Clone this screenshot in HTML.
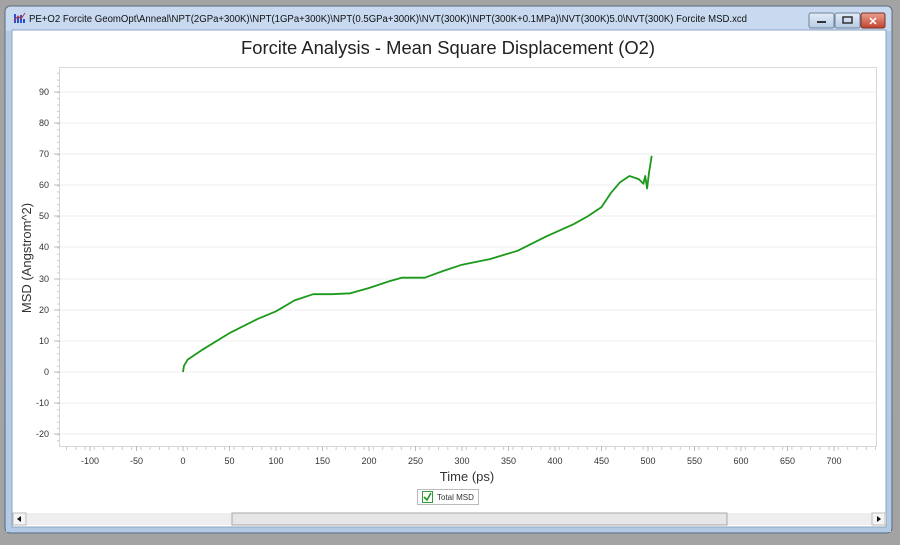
<!DOCTYPE html>
<html><head><meta charset="utf-8"><style>
body{margin:0;width:900px;height:540px;background:#a3a3a3;overflow:hidden;font-family:"Liberation Sans",sans-serif}
</style></head><body>
<svg width="900" height="540" xmlns="http://www.w3.org/2000/svg" font-family="Liberation Sans, sans-serif">
<defs><linearGradient id="tb" x1="0" y1="0" x2="0" y2="1"><stop offset="0" stop-color="#c9daf0"/><stop offset="1" stop-color="#a9c3e3"/></linearGradient>
<linearGradient id="cl" x1="0" y1="0" x2="0" y2="1"><stop offset="0" stop-color="#e8a091"/><stop offset="1" stop-color="#c2432e"/></linearGradient>
<linearGradient id="bt" x1="0" y1="0" x2="0" y2="1"><stop offset="0" stop-color="#e3ecf7"/><stop offset="1" stop-color="#b7cbe4"/></linearGradient></defs>
<rect x="5" y="6" width="887" height="527" rx="5" fill="url(#tb)" stroke="#5b6b7c"/>
<rect x="6" y="31" width="885" height="501" fill="#b4cbe6"/>
<rect x="12" y="30" width="874" height="497" fill="#fff" stroke="#8ea4bf"/>
<g><rect x="14" y="14" width="2" height="9" fill="#2a4fd0"/><rect x="17" y="17" width="2" height="6" fill="#2a4fd0"/><rect x="20" y="15" width="2" height="8" fill="#2a4fd0"/><rect x="23" y="19" width="2" height="4" fill="#2a4fd0"/><path d="M14 21 L18 16 L21 19 L25 13" stroke="#d03030" fill="none"/></g>
<text x="29" y="22" font-size="10" textLength="718" lengthAdjust="spacingAndGlyphs" fill="#111">PE+O2 Forcite GeomOpt\Anneal\NPT(2GPa+300K)\NPT(1GPa+300K)\NPT(0.5GPa+300K)\NVT(300K)\NPT(300K+0.1MPa)\NVT(300K)5.0\NVT(300K) Forcite MSD.xcd</text>
<rect x="809" y="13" width="25" height="15" rx="2" fill="url(#bt)" stroke="#6f839c"/>
<rect x="817" y="21" width="9" height="2" fill="#333"/>
<rect x="835" y="13" width="25" height="15" rx="2" fill="url(#bt)" stroke="#6f839c"/>
<rect x="843" y="17" width="9" height="6" fill="none" stroke="#333" stroke-width="1.5"/>
<rect x="861" y="13" width="24" height="15" rx="2" fill="url(#cl)" stroke="#7a3020"/>
<text x="873" y="25" font-size="11" font-weight="bold" fill="#fff" text-anchor="middle">✕</text>
<text x="448" y="54" font-size="18.5" textLength="414" lengthAdjust="spacingAndGlyphs" fill="#222" text-anchor="middle">Forcite Analysis - Mean Square Displacement (O2)</text>
<rect x="59.5" y="67.5" width="817" height="379" fill="#fff" stroke="#d8d8d8"/>
<g stroke="#ececec" stroke-width="1">
<line x1="60" x2="876" y1="92" y2="92"/><line x1="60" x2="876" y1="123" y2="123"/><line x1="60" x2="876" y1="154" y2="154"/><line x1="60" x2="876" y1="185" y2="185"/><line x1="60" x2="876" y1="216" y2="216"/><line x1="60" x2="876" y1="247" y2="247"/><line x1="60" x2="876" y1="279" y2="279"/><line x1="60" x2="876" y1="310" y2="310"/><line x1="60" x2="876" y1="341" y2="341"/><line x1="60" x2="876" y1="372" y2="372"/><line x1="60" x2="876" y1="403" y2="403"/><line x1="60" x2="876" y1="434" y2="434"/>
</g>
<g stroke="#ccc" stroke-dasharray="1 5.22">
<line x1="57" x2="60" y1="73.3" y2="73.3" stroke-dasharray="none"/>
<line x1="58.5" x2="58.5" y1="79.6" y2="446" stroke-width="3"/>
<line x1="66" x2="876" y1="448.5" y2="448.5" stroke-width="3" stroke-dasharray="1 8.3"/>
</g>
<g stroke="#bbb">
<line x1="54" x2="60" y1="92" y2="92"/><line x1="54" x2="60" y1="123" y2="123"/><line x1="54" x2="60" y1="154" y2="154"/><line x1="54" x2="60" y1="185" y2="185"/><line x1="54" x2="60" y1="216" y2="216"/><line x1="54" x2="60" y1="247" y2="247"/><line x1="54" x2="60" y1="279" y2="279"/><line x1="54" x2="60" y1="310" y2="310"/><line x1="54" x2="60" y1="341" y2="341"/><line x1="54" x2="60" y1="372" y2="372"/><line x1="54" x2="60" y1="403" y2="403"/><line x1="54" x2="60" y1="434" y2="434"/>
<line x1="90" x2="90" y1="446" y2="451"/><line x1="136.5" x2="136.5" y1="446" y2="451"/><line x1="183" x2="183" y1="446" y2="451"/><line x1="229.5" x2="229.5" y1="446" y2="451"/><line x1="276" x2="276" y1="446" y2="451"/><line x1="322.5" x2="322.5" y1="446" y2="451"/><line x1="369" x2="369" y1="446" y2="451"/><line x1="415.5" x2="415.5" y1="446" y2="451"/><line x1="462" x2="462" y1="446" y2="451"/><line x1="508.5" x2="508.5" y1="446" y2="451"/><line x1="555" x2="555" y1="446" y2="451"/><line x1="601.5" x2="601.5" y1="446" y2="451"/><line x1="648" x2="648" y1="446" y2="451"/><line x1="694.5" x2="694.5" y1="446" y2="451"/><line x1="741" x2="741" y1="446" y2="451"/><line x1="787.5" x2="787.5" y1="446" y2="451"/><line x1="834" x2="834" y1="446" y2="451"/>
</g>
<g font-size="9" fill="#333" text-anchor="end">
<text x="49" y="95">90</text><text x="49" y="126">80</text><text x="49" y="157">70</text><text x="49" y="188">60</text><text x="49" y="219">50</text><text x="49" y="250">40</text><text x="49" y="282">30</text><text x="49" y="313">20</text><text x="49" y="344">10</text><text x="49" y="375">0</text><text x="49" y="406">-10</text><text x="49" y="437">-20</text>
</g>
<g font-size="9" fill="#333" text-anchor="middle">
<text x="90" y="464">-100</text><text x="136.5" y="464">-50</text><text x="183" y="464">0</text><text x="229.5" y="464">50</text><text x="276" y="464">100</text><text x="322.5" y="464">150</text><text x="369" y="464">200</text><text x="415.5" y="464">250</text><text x="462" y="464">300</text><text x="508.5" y="464">350</text><text x="555" y="464">400</text><text x="601.5" y="464">450</text><text x="648" y="464">500</text><text x="694.5" y="464">550</text><text x="741" y="464">600</text><text x="787.5" y="464">650</text><text x="834" y="464">700</text>
</g>
<text x="467" y="481" font-size="13" fill="#333" text-anchor="middle">Time (ps)</text>
<text transform="translate(31,258) rotate(-90)" font-size="13" fill="#333" text-anchor="middle">MSD (Angstrom^2)</text>
<polyline fill="none" stroke="#1a9a1a" stroke-width="1.8" stroke-linejoin="round" points="183,372 184,365.8 187.7,359.6 201.6,350.2 229.5,333.1 257.4,319.1 276,311.3 294.6,300.4 313.2,294.2 331.8,294.2 350.4,293.3 369,288 387.6,281.8 401.6,277.7 424.8,277.7 443.4,270.9 462,264.7 489.9,259.1 517.8,250.7 545.7,236.7 573.6,224.2 587.6,216.4 601.5,207.1 610.8,193.1 620.1,182.2 629.4,176 638.7,179.1 643.4,183.8 645.2,176 647.1,188.5 649,172.9 651.7,155.8"/>
<rect x="417.5" y="489.5" width="61" height="15" fill="#fff" stroke="#bbb"/>
<rect x="422.5" y="491.5" width="10" height="11" fill="#fff" stroke="#3a9a3a"/>
<path d="M424 497 L427 500 L431 493" stroke="#1a9a1a" stroke-width="1.6" fill="none"/>
<text x="437" y="500" font-size="8" fill="#333">Total MSD</text>
<rect x="13" y="513" width="873" height="12" fill="#eeeeee"/>
<rect x="13" y="513" width="13" height="12" fill="#f4f4f4" stroke="#bbb"/>
<path d="M21 516 L17 519 L21 522Z" fill="#111"/>
<rect x="232" y="513" width="495" height="12" fill="#e6e6e6" stroke="#a8a8a8"/>
<rect x="872" y="513" width="13" height="12" fill="#f4f4f4" stroke="#bbb"/>
<path d="M877 516 L881 519 L877 522Z" fill="#111"/>
</svg>
</body></html>
